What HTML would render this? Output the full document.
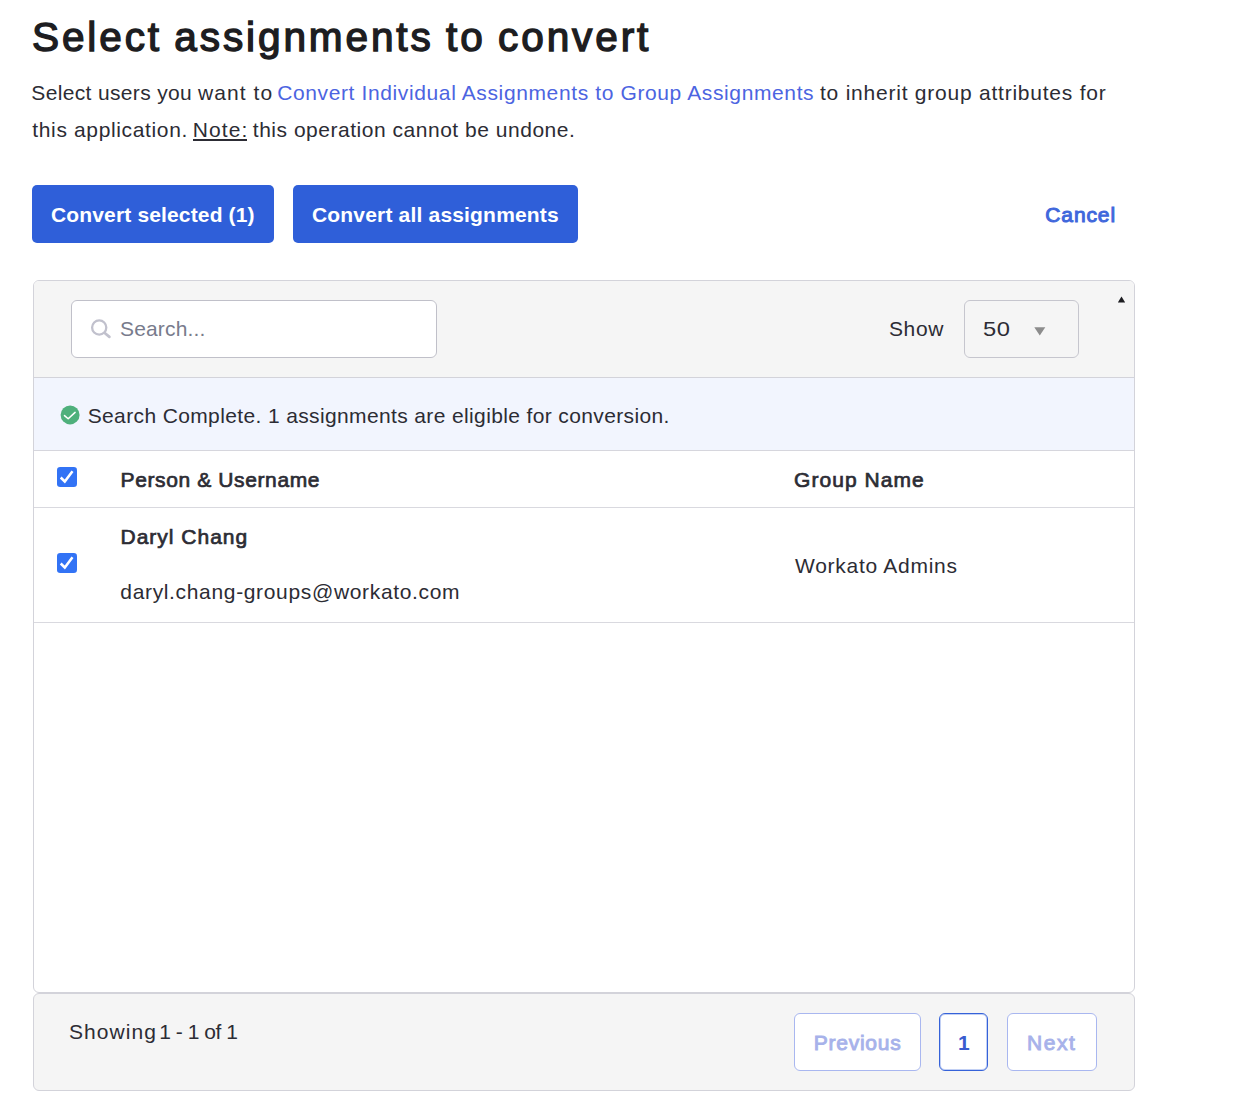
<!DOCTYPE html>
<html lang="en"><head><meta charset="utf-8"><title>Select assignments to convert</title>
<style>
*{box-sizing:border-box;margin:0;padding:0}
html,body{width:1260px;height:1112px;background:#fff;overflow:hidden}
body{font-family:"Liberation Sans",sans-serif;color:#2c2c34;position:relative}
button{font:inherit;border:0;padding:0;margin:0;display:block;cursor:pointer}
.t{position:absolute;white-space:nowrap;font-size:21px;line-height:24px;color:#2c2c34;font-weight:normal}
.b{-webkit-text-stroke:0.7px currentColor}
h1{position:absolute;left:32px;top:13.3px;font-size:40.6px;line-height:48px;font-weight:normal;color:#1d1d21;white-space:nowrap;letter-spacing:2.86px;word-spacing:-1.7px;-webkit-text-stroke:1.4px currentColor}
a{text-decoration:none}
.note{text-decoration:none}
.note-line{position:absolute;left:193px;top:139px;width:53.5px;height:1.5px;background:#2c2c34}
.btn{position:absolute;top:185px;height:58px;background:#2f5fd9;border-radius:5px}
.btn .t{color:#fff;font-weight:bold}
.panel{position:absolute;left:33px;top:280px;width:1102px;height:713px;border:1px solid #d3d3da;border-radius:6px;background:#fff;overflow:hidden}
.toolbar{position:absolute;left:0;top:0;width:1100px;height:97px;background:#f5f5f5;border-bottom:1px solid #d3d3da}
.info{position:absolute;left:0;top:97px;width:1100px;height:73px;background:#f2f5fe;border-bottom:1px solid #d6d6dd}
.thead{position:absolute;left:0;top:170px;width:1100px;height:57px;border-bottom:1px solid #d9d9df}
.row{position:absolute;left:0;top:227px;width:1100px;height:115px;border-bottom:1px solid #d9d9df}
.search{position:absolute;left:37px;top:19px;width:366px;height:58px;border:1px solid #c0c0c9;border-radius:6px;background:#fff}
.sel{position:absolute;left:930px;top:19px;width:115px;height:58px;border:1px solid #c6c6ce;border-radius:6px;background:#f5f5f5}
.cb{position:absolute;left:23px;width:20px;height:20px}
.footer{position:absolute;left:33px;top:993px;width:1102px;height:98px;border:1px solid #d3d3da;border-radius:6px;background:#f5f5f5}
.pg{position:absolute;top:19px;height:58px;border:1px solid #a9b7f0;border-radius:6px;background:#fff}
.pg .t{color:#a7b2ea;-webkit-text-stroke:0.9px currentColor}
.pg.cur{border-color:#3562d9;box-shadow:inset 0 0 0 1px rgba(53,98,217,.3)}
.pg.cur .t{color:#3a5ccf;font-weight:bold;-webkit-text-stroke:0}
</style></head><body>
<h1>Select assignments to convert</h1>
<p class="desc">
<span class="t" style="left:31.3px;top:81.4px;letter-spacing:0.35px">Select users you</span>
<span class="t" style="left:198.1px;top:81.4px;letter-spacing:1.05px">want to</span>
<a class="t" style="left:277.2px;top:81.4px;letter-spacing:0.62px;color:#4c64e1">Convert Individual Assignments to Group Assignments</a>
<span class="t" style="left:820px;top:81.4px;letter-spacing:0.77px">to inherit group attributes for</span>
<span class="t" style="left:32.3px;top:118.1px;letter-spacing:0.64px">this application.</span>
<u class="t note" style="left:192.8px;top:118.1px;letter-spacing:1.1px">Note:</u>
<span class="t" style="left:252.8px;top:118.1px;letter-spacing:0.52px">this operation cannot be undone.</span>
</p>
<div class="note-line"></div>

<button class="btn" style="left:32px;width:242px"><span class="t" style="left:19px;top:17.5px;letter-spacing:0.15px">Convert selected (1)</span></button>
<button class="btn" style="left:293px;width:285px"><span class="t" style="left:19px;top:17.5px;letter-spacing:0.18px">Convert all assignments</span></button>
<a class="t b" style="left:1045.3px;top:202.6px;letter-spacing:0.88px;color:#3f67dc;-webkit-text-stroke-width:1px">Cancel</a>

<div class="panel">
 <div class="toolbar">
  <div class="search">
   <svg style="position:absolute;left:16px;top:15px" width="26" height="26" viewBox="0 0 26 26"><circle cx="11.2" cy="11.5" r="7.1" fill="none" stroke="#c1c1cd" stroke-width="2.3"/><path d="M16.7 17 L21.4 20.9" stroke="#c1c1cd" stroke-width="2.7" stroke-linecap="round"/></svg>
   <span class="t" style="left:48px;top:16.3px;letter-spacing:0.16px;color:#787b8c">Search...</span>
  </div>
  <label class="t" style="left:855px;top:36.2px;letter-spacing:0.6px">Show</label>
  <div class="sel">
   <span class="t" style="left:17.6px;top:16.2px;letter-spacing:0.4px;transform:scaleX(1.13);transform-origin:0 50%">50</span>
   <svg style="position:absolute;left:69px;top:26px" width="12" height="9" viewBox="0 0 12 9"><path d="M0.3 0.3 H11.3 L5.8 8.5 Z" fill="#8c8c8c"/></svg>
  </div>
  <svg style="position:absolute;left:1083px;top:15px" width="9" height="7" viewBox="0 0 9 7"><path d="M0.8 6.6 L4.5 0.6 L8.2 6.6 Z" fill="#1d1d21"/></svg>
 </div>
 <div class="info">
  <svg style="position:absolute;left:26px;top:27px" width="20" height="20" viewBox="0 0 20 20"><circle cx="10.1" cy="9.9" r="9.5" fill="#4fb07c"/><path d="M4.5 10.6 L8.2 13.8 L15.1 7.4" fill="none" stroke="#fff" stroke-width="1.5" stroke-linecap="round" stroke-linejoin="round"/></svg>
  <span class="t" style="left:53.7px;top:25.5px;letter-spacing:0.37px">Search Complete. 1 assignments are eligible for conversion.</span>
 </div>
 <div class="thead">
  <svg class="cb" style="top:16px" viewBox="0 0 20 20"><rect width="20" height="20" rx="3.2" fill="#3273f5"/><path d="M3.7 10.5 L7.8 14.5 L15.5 4.2" fill="none" stroke="#fff" stroke-width="2.5"/></svg>
  <span class="t b" style="left:86.5px;top:16.7px;letter-spacing:0.62px">Person &amp; Username</span>
  <span class="t b" style="left:760px;top:16.7px;letter-spacing:1.06px">Group Name</span>
 </div>
 <div class="row">
  <svg class="cb" style="top:45px" viewBox="0 0 20 20"><rect width="20" height="20" rx="3.2" fill="#3273f5"/><path d="M3.7 10.5 L7.8 14.5 L15.5 4.2" fill="none" stroke="#fff" stroke-width="2.5"/></svg>
  <span class="t b" style="left:86.5px;top:16.7px;letter-spacing:1px">Daryl Chang</span>
  <span class="t" style="left:86.3px;top:71.7px;letter-spacing:0.66px">daryl.chang-groups@workato.com</span>
  <span class="t" style="left:761px;top:45.9px;letter-spacing:0.73px">Workato Admins</span>
 </div>
</div>

<div class="footer">
 <span class="t" style="left:35px;top:26px;letter-spacing:1.07px">Showing</span>
 <span class="t" style="left:125.2px;top:26px;letter-spacing:-0.47px">1 - 1 of 1</span>
 <button class="pg" style="left:760px;width:127px"><span class="t" style="left:18.7px;top:17.2px;letter-spacing:0.76px">Previous</span></button>
 <button class="pg cur" style="left:905px;width:49px"><span class="t" style="left:18px;top:17.2px">1</span></button>
 <button class="pg" style="left:973px;width:90px"><span class="t" style="left:19px;top:17.2px;letter-spacing:1.57px">Next</span></button>
</div>
</body></html>
